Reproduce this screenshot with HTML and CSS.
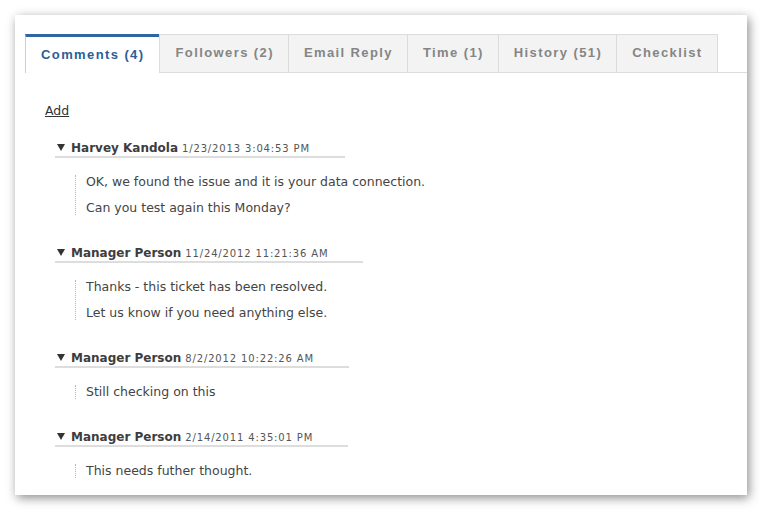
FILE: index.html
```html
<!DOCTYPE html>
<html>
<head>
<meta charset="utf-8">
<link rel="stylesheet" href="styles.css">
</head>
<body>
<div class="panel">
  <div class="tabs">
    <div class="tab active">Comments (4)</div>
    <div class="tab">Followers (2)</div>
    <div class="tab">Email Reply</div>
    <div class="tab">Time (1)</div>
    <div class="tab">History (51)</div>
    <div class="tab last">Checklist</div>
  </div>
  <div class="content">
    <a class="add" href="#">Add</a>
    <div class="comments">
      <div class="comment">
        <div class="head">
          <svg class="tri" width="8" height="7" viewBox="0 0 8 7"><polygon points="0,0 8,0 4,7" /></svg>
          <span class="name">Harvey Kandola</span>
          <span class="date">1/23/2013 3:04:53 PM</span>
        </div>
        <div class="text">
          <p>OK, we found the issue and it is your data connection.</p>
          <p>Can you test again this Monday?</p>
        </div>
      </div>
      <div class="comment">
        <div class="head">
          <svg class="tri" width="8" height="7" viewBox="0 0 8 7"><polygon points="0,0 8,0 4,7" /></svg>
          <span class="name">Manager Person</span>
          <span class="date">11/24/2012 11:21:36 AM</span>
        </div>
        <div class="text">
          <p>Thanks - this ticket has been resolved.</p>
          <p>Let us know if you need anything else.</p>
        </div>
      </div>
      <div class="comment">
        <div class="head">
          <svg class="tri" width="8" height="7" viewBox="0 0 8 7"><polygon points="0,0 8,0 4,7" /></svg>
          <span class="name">Manager Person</span>
          <span class="date">8/2/2012 10:22:26 AM</span>
        </div>
        <div class="text">
          <p>Still checking on this</p>
        </div>
      </div>
      <div class="comment">
        <div class="head">
          <svg class="tri" width="8" height="7" viewBox="0 0 8 7"><polygon points="0,0 8,0 4,7" /></svg>
          <span class="name">Manager Person</span>
          <span class="date">2/14/2011 4:35:01 PM</span>
        </div>
        <div class="text">
          <p>This needs futher thought.</p>
        </div>
      </div>
    </div>
  </div>
</div>
</body>
</html>
```

FILE: styles.css
```css
html, body {
  margin: 0;
  padding: 0;
  background: #ffffff;
}
body {
  padding: 15px;
  font-family: "DejaVu Sans", Verdana, sans-serif;
}
.panel {
  width: 732px;
  height: 480px;
  box-sizing: border-box;
  background: #ffffff;
  box-shadow: 2px 3px 10px rgba(0, 0, 0, 0.45);
  padding-top: 19px;
}
.tabs {
  display: flex;
  margin-left: 10px;
  border-bottom: 1px solid #dcdcdc;
  font-family: "Liberation Sans", Arial, sans-serif;
  font-weight: bold;
  font-size: 13px;
  letter-spacing: 1.4px;
  line-height: 15px;
}
.tab {
  background: #f3f3f3;
  color: #858585;
  border-top: 1px solid #dcdcdc;
  border-left: 1px solid #dcdcdc;
  padding: 10px 14px 12px 15px;
}
.tab.last {
  border-right: 1px solid #dcdcdc;
}
.tab.active {
  background: #ffffff;
  color: #2c5d96;
  border-top: 3px solid #2f65a0;
  border-left-color: #cfcfcf;
  padding: 10px 15px 11px 15px;
  margin-bottom: -1px;
}
.content {
  margin-left: 30px;
  margin-top: 31px;
}
.add {
  display: block;
  width: fit-content;
  font-size: 12.5px;
  line-height: 14px;
  color: #333333;
  text-decoration: underline;
}
.comments {
  margin-top: 23px;
  margin-left: 10px;
  display: flex;
  flex-direction: column;
  gap: 31px;
}
.head {
  display: flex;
  align-items: baseline;
  width: fit-content;
  line-height: 14px;
  padding-right: 35px;
  border-bottom: 2px solid #dddddd;
}
.tri {
  align-self: flex-start;
  margin: 3px 6px 0 2px;
  fill: #333333;
}
.name {
  font-size: 12px;
  font-weight: bold;
  color: #3d3d3d;
}
.date {
  font-size: 10px;
  letter-spacing: 0.85px;
  color: #555555;
  margin-left: 4px;
}
.text {
  margin-top: 17px;
  margin-left: 20px;
  padding-left: 10px;
  border-left: 1px dotted #b5b5b5;
  display: flex;
  flex-direction: column;
  gap: 12px;
}
.text p {
  margin: 0;
  font-size: 12.5px;
  line-height: 14px;
  color: #444444;
}
```
